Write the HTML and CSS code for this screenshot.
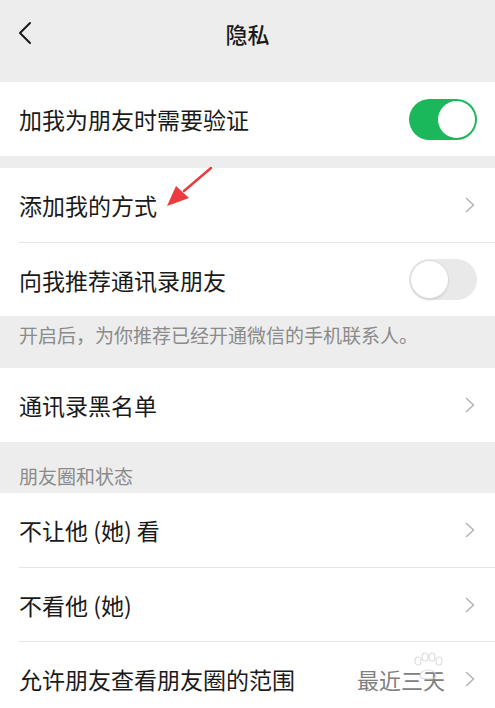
FILE: index.html
```html
<!DOCTYPE html>
<html lang="zh-CN">
<head>
    <meta charset="UTF-8">
    <meta name="viewport" content="width=device-width, initial-scale=1.0">
    <title>隐私</title>
    <link rel="stylesheet" href="styles.css">
</head>
<body>
    <div class="page">
        <header class="navbar">
            <span class="back">
                <svg width="16" height="24" viewBox="0 0 16 24"><path d="M13 2 L3 12 L13 22" fill="none" stroke="#1a1a1a" stroke-width="2" stroke-linecap="round" stroke-linejoin="round"/></svg>
            </span>
            <h1 class="title">隐私</h1>
        </header>

        <div class="group">
            <div class="cell">
                <div class="cell-body">
                    <span class="label">加我为朋友时需要验证</span>
                    <span class="switch on"><span class="knob"></span></span>
                </div>
            </div>
        </div>

        <div class="group gap">
            <div class="cell">
                <div class="cell-body link">
                    <span class="label">添加我的方式</span>
                    <svg class="chevron" width="10" height="16" viewBox="0 0 10 16"><path d="M1.5 1.5 L8.5 8 L1.5 14.5" fill="none" stroke="#b5b5b5" stroke-width="1.6" stroke-linecap="round" stroke-linejoin="round"/></svg>
                </div>
            </div>
            <div class="cell">
                <div class="cell-body">
                    <span class="label">向我推荐通讯录朋友</span>
                    <span class="switch"><span class="knob"></span></span>
                </div>
            </div>
        </div>
        <p class="tip">开启后，为你推荐已经开通微信的手机联系人。</p>

        <div class="group">
            <div class="cell">
                <div class="cell-body link">
                    <span class="label">通讯录黑名单</span>
                    <svg class="chevron" width="10" height="16" viewBox="0 0 10 16"><path d="M1.5 1.5 L8.5 8 L1.5 14.5" fill="none" stroke="#b5b5b5" stroke-width="1.6" stroke-linecap="round" stroke-linejoin="round"/></svg>
                </div>
            </div>
        </div>

        <p class="section-title">朋友圈和状态</p>
        <div class="group">
            <div class="cell">
                <div class="cell-body link">
                    <span class="label">不让他 (她) 看</span>
                    <svg class="chevron" width="10" height="16" viewBox="0 0 10 16"><path d="M1.5 1.5 L8.5 8 L1.5 14.5" fill="none" stroke="#b5b5b5" stroke-width="1.6" stroke-linecap="round" stroke-linejoin="round"/></svg>
                </div>
            </div>
            <div class="cell">
                <div class="cell-body link">
                    <span class="label">不看他 (她)</span>
                    <svg class="chevron" width="10" height="16" viewBox="0 0 10 16"><path d="M1.5 1.5 L8.5 8 L1.5 14.5" fill="none" stroke="#b5b5b5" stroke-width="1.6" stroke-linecap="round" stroke-linejoin="round"/></svg>
                </div>
            </div>
            <div class="cell">
                <div class="cell-body link">
                    <span class="label">允许朋友查看朋友圈的范围</span>
                    <span class="value">最近三天</span>
                    <svg class="chevron" width="10" height="16" viewBox="0 0 10 16"><path d="M1.5 1.5 L8.5 8 L1.5 14.5" fill="none" stroke="#b5b5b5" stroke-width="1.6" stroke-linecap="round" stroke-linejoin="round"/></svg>
                </div>
            </div>
        </div>

        <!-- red annotation arrow drawn over the screenshot -->
        <svg class="arrow" width="495" height="708" viewBox="0 0 495 708">
            <line x1="211" y1="168" x2="184" y2="191" stroke="#ec3a3f" stroke-width="2.5" stroke-linecap="round"/>
            <polygon points="167,206 176,186 189,198" fill="#ec3a3f"/>
        </svg>
        <!-- faint paw watermark -->
        <svg class="watermark" width="40" height="30" viewBox="0 0 40 30">
            <g fill="none" stroke="#d6d6d6" stroke-width="1.2">
                <ellipse cx="10" cy="9" rx="3" ry="4"/>
                <ellipse cx="17" cy="5" rx="3" ry="4"/>
                <ellipse cx="24" cy="5" rx="3" ry="4"/>
                <ellipse cx="31" cy="9" rx="3" ry="4"/>
                <path d="M12 24 C12 16 28 16 28 24 C28 28 12 28 12 24 Z"/>
            </g>
        </svg>
    </div>
</body>
</html>
```

FILE: styles.css
```css
* {
    box-sizing: border-box;
}

body {
    margin: 0;
    padding: 0;
    background: #ededed;
    font-family: "Noto Sans CJK SC", "Noto Sans", sans-serif;
    color: #1a1a1a;
}

.page {
    position: relative;
    width: 495px;
    height: 708px;
    overflow: hidden;
}

/* Nav bar */
.navbar {
    height: 82px;
    display: flex;
    align-items: flex-start;
    justify-content: center;
    padding-top: 10px;
}

.back {
    position: absolute;
    left: 17px;
    top: 21px;
    display: flex;
}

.title {
    margin: 0;
    font-size: 22px;
    font-weight: 500;
    line-height: 46px;
}

/* Cells */
.group {
    background: #fff;
}

.group.gap {
    margin-top: 12px;
}

.cell {
    padding-left: 19px;
}

.cell-body {
    height: 74px;
    display: flex;
    align-items: center;
    padding-right: 18px;
    border-top: 1px solid #e6e6e6;
}

.cell:first-child .cell-body {
    border-top: none;
}

.cell-body.link {
    padding-right: 20px;
}

.label {
    flex: 1;
    font-size: 23px;
    line-height: 30px;
}

.value {
    font-size: 22px;
    color: #808080;
    margin-right: 20px;
}

.chevron {
    display: block;
}

/* Switch */
.switch {
    width: 68px;
    height: 41px;
    border-radius: 21px;
    background: #e9e9e9;
    padding: 2px;
    display: flex;
    justify-content: flex-start;
}

.switch.on {
    background: #1bb85b;
    justify-content: flex-end;
}

.knob {
    width: 37px;
    height: 37px;
    border-radius: 50%;
    background: #fff;
    box-shadow: 0 0 0 1px #dcdcdc, 0 2px 3px rgba(0, 0, 0, 0.12);
}

.switch.on .knob {
    box-shadow: none;
}

/* Gray texts */
.tip {
    margin: 0;
    padding: 6px 19px 20px;
    font-size: 19px;
    line-height: 26px;
    color: #8a8a8a;
}

.section-title {
    margin: 0;
    padding: 21px 19px 4px;
    font-size: 19px;
    line-height: 26px;
    color: #8a8a8a;
}

/* Overlays */
.arrow {
    position: absolute;
    left: 0;
    top: 0;
    pointer-events: none;
}

.watermark {
    position: absolute;
    left: 408px;
    top: 652px;
    opacity: 0.8;
}
```
